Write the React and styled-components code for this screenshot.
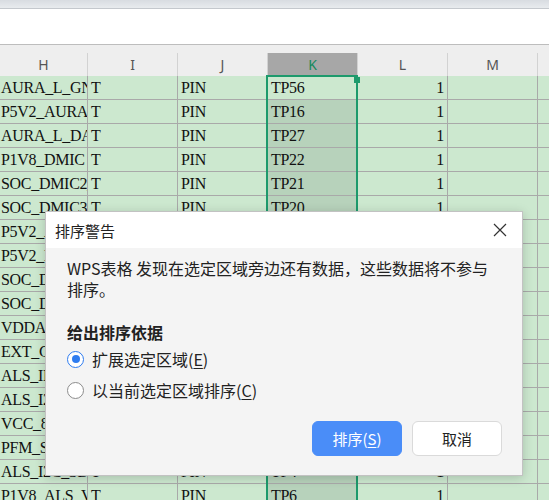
import React from 'react';
import styled, { createGlobalStyle } from 'styled-components';

const GlobalStyle = createGlobalStyle`
  html, body {
    margin: 0;
    padding: 0;
    background: #fff;
    overflow: hidden;
  }
  * {
    box-sizing: border-box;
  }
`;

const UI_FONT = `"Noto Sans CJK SC", "Noto Sans", sans-serif`;
const CELL_FONT = `"Liberation Serif", "Noto Sans CJK SC", serif`;
const GREEN = '#1d9a6c';

const Page = styled.div`
  position: relative;
  width: 549px;
  height: 500px;
  overflow: hidden;
  background: #fff;
`;

const TopStrip = styled.div`
  height: 9px;
  background: linear-gradient(#d8dce1, #e8ebee);
  border-bottom: 1px solid #c4c8cd;
`;

const FormulaBar = styled.div`
  height: 36px;
  background: #fff;
  border-bottom: 1px solid #bdbdbd;
`;

const HeaderRow = styled.div`
  display: flex;
  align-items: flex-end;
  height: 31px;
  background: #eeeeee;
`;

const HeaderCell = styled.div`
  flex: none;
  width: ${(p) => p.$w}px;
  height: 23px;
  line-height: 23px;
  text-align: center;
  font-family: "Noto Sans", sans-serif;
  font-size: 14px;
  color: ${(p) => (p.$active ? '#15895c' : '#555')};
  background: ${(p) => (p.$active ? '#a7a7a7' : 'transparent')};
  border-right: 1px solid #d2d2d2;
`;

const Sheet = styled.div`
  position: relative;
`;

const Row = styled.div`
  display: flex;
  height: 24px;
`;

const Cell = styled.div`
  flex: none;
  width: ${(p) => p.$w}px;
  height: 24px;
  padding: 0 3px 0 ${(p) => (p.$first ? 1 : 3)}px;
  line-height: 24px;
  font-family: ${CELL_FONT};
  font-size: 16px;
  letter-spacing: -0.3px;
  color: #111;
  white-space: nowrap;
  overflow: hidden;
  text-align: ${(p) => (p.$num ? 'right' : 'left')};
  background: ${(p) => (p.$selected ? '#b7d2bb' : '#cce8cf')};
  border-right: 1px solid #a9a9a9;
  border-bottom: 1px solid #a9a9a9;
`;

const Selection = styled.div`
  position: absolute;
  left: 266px;
  top: -1px;
  width: 92px;
  height: 460px;
  border: 2px solid ${GREEN};
  pointer-events: none;
`;

const FillHandle = styled.div`
  position: absolute;
  left: 354px;
  top: 1px;
  width: 6px;
  height: 6px;
  background: ${GREEN};
`;

const Dialog = styled.div`
  position: absolute;
  left: 45px;
  top: 211px;
  width: 478px;
  height: 265px;
  display: flex;
  flex-direction: column;
  background: #f4f4f4;
  border: 1px solid #c2c2c2;
  box-shadow: 0 2px 10px rgba(0, 0, 0, 0.18);
  font-family: ${UI_FONT};
  color: #222;
`;

const TitleBar = styled.div`
  display: flex;
  align-items: center;
  justify-content: space-between;
  height: 36px;
  padding: 0 12px 0 9px;
  background: #fff;
  font-size: 15px;
`;

const CloseButton = styled.div`
  display: flex;
  align-items: center;
  justify-content: center;
  width: 20px;
  height: 20px;
`;

const Body = styled.div`
  flex: 1;
  display: flex;
  flex-direction: column;
  padding: 10px 20px 19px 21px;
`;

const Message = styled.p`
  margin: 0;
  font-size: 16px;
  line-height: 21px;
`;

const SectionTitle = styled.div`
  margin-top: 21px;
  font-size: 16px;
  font-weight: bold;
  line-height: 22px;
`;

const Options = styled.div`
  display: flex;
  flex-direction: column;
  gap: 9px;
  margin-top: 5px;
`;

const Option = styled.label`
  display: flex;
  align-items: center;
  gap: 8px;
  height: 22px;
  font-size: 16px;
`;

const Radio = styled.span`
  flex: none;
  position: relative;
  width: 17px;
  height: 17px;
  border-radius: 50%;
  background: #fff;
  border: ${(p) => (p.$checked ? '1.5px solid #2e7cf0' : '1px solid #8c8c8c')};
  &::after {
    content: '';
    display: ${(p) => (p.$checked ? 'block' : 'none')};
    position: absolute;
    left: 50%;
    top: 50%;
    width: 8px;
    height: 8px;
    margin: -4px 0 0 -4px;
    border-radius: 50%;
    background: #2e7cf0;
  }
`;

const Key = styled.span`
  text-decoration: underline;
  text-underline-offset: 2px;
`;

const Buttons = styled.div`
  display: flex;
  justify-content: flex-end;
  gap: 10px;
  margin-top: auto;
`;

const Button = styled.button`
  width: 90px;
  height: 35px;
  border-radius: 6px;
  font-family: ${UI_FONT};
  font-size: 15px;
  cursor: pointer;
  color: ${(p) => (p.$primary ? '#fff' : '#222')};
  background: ${(p) => (p.$primary ? '#4a8df8' : '#fff')};
  border: 1px solid ${(p) => (p.$primary ? '#4a8df8' : '#dadada')};
`;

const columns = [
  { key: 'H', w: 88 },
  { key: 'I', w: 90 },
  { key: 'J', w: 90 },
  { key: 'K', w: 90 },
  { key: 'L', w: 90 },
  { key: 'M', w: 90 },
  { key: 'N', w: 90 },
];

const rows = [
  ['AURA_L_GND', 'T', 'PIN', 'TP56', '1'],
  ['P5V2_AURA_L', 'T', 'PIN', 'TP16', '1'],
  ['AURA_L_DATA', 'T', 'PIN', 'TP27', '1'],
  ['P1V8_DMIC', 'T', 'PIN', 'TP22', '1'],
  ['SOC_DMIC2_CLK', 'T', 'PIN', 'TP21', '1'],
  ['SOC_DMIC3_CLK', 'T', 'PIN', 'TP20', '1'],
  ['P5V2_AURA_R', 'T', 'PIN', 'TP17', '1'],
  ['P5V2_LED', 'T', 'PIN', 'TP18', '1'],
  ['SOC_DMIC2_DAT', 'T', 'PIN', 'TP23', '1'],
  ['SOC_DMIC3_DAT', 'T', 'PIN', 'TP24', '1'],
  ['VDDA_1V8', 'T', 'PIN', 'TP11', '1'],
  ['EXT_CLK', 'T', 'PIN', 'TP12', '1'],
  ['ALS_INT', 'T', 'PIN', 'TP3', '1'],
  ['ALS_I2C_SCL', 'T', 'PIN', 'TP5', '1'],
  ['VCC_8V', 'T', 'PIN', 'TP9', '1'],
  ['PFM_SW', 'T', 'PIN', 'TP8', '1'],
  ['ALS_I2C_SDA', 'T', 'PIN', 'TP4', '1'],
  ['P1V8_ALS_VDD', 'T', 'PIN', 'TP6', '1'],
];

function CloseIcon() {
  return (
    <svg width="14" height="14" viewBox="0 0 14 14">
      <path d="M1 1 L13 13 M13 1 L1 13" stroke="#333" strokeWidth="1.2" fill="none" />
    </svg>
  );
}

export default function App() {
  return (
    <Page>
      <GlobalStyle />
      <TopStrip />
      <FormulaBar />
      <HeaderRow>
        {columns.map((c) => (
          <HeaderCell key={c.key} $w={c.w} $active={c.key === 'K'}>
            {c.key === 'N' ? '' : c.key}
          </HeaderCell>
        ))}
      </HeaderRow>
      <Sheet>
        {rows.map((r, i) => (
          <Row key={i}>
            <Cell $w={88} $first>{r[0]}</Cell>
            <Cell $w={90}>{r[1]}</Cell>
            <Cell $w={90}>{r[2]}</Cell>
            <Cell $w={90} $selected={i > 0}>{r[3]}</Cell>
            <Cell $w={90} $num>{r[4]}</Cell>
            <Cell $w={90} />
            <Cell $w={90} />
          </Row>
        ))}
        <Selection />
        <FillHandle />
      </Sheet>

      <Dialog>
        <TitleBar>
          <span>排序警告</span>
          <CloseButton>
            <CloseIcon />
          </CloseButton>
        </TitleBar>
        <Body>
          <Message>
            WPS表格 发现在选定区域旁边还有数据，这些数据将不参与
            <br />
            排序。
          </Message>
          <SectionTitle>给出排序依据</SectionTitle>
          <Options>
            <Option>
              <Radio $checked />
              <span>
                扩展选定区域(<Key>E</Key>)
              </span>
            </Option>
            <Option>
              <Radio />
              <span>
                以当前选定区域排序(<Key>C</Key>)
              </span>
            </Option>
          </Options>
          <Buttons>
            <Button $primary>
              排序(<Key>S</Key>)
            </Button>
            <Button>取消</Button>
          </Buttons>
        </Body>
      </Dialog>
    </Page>
  );
}
